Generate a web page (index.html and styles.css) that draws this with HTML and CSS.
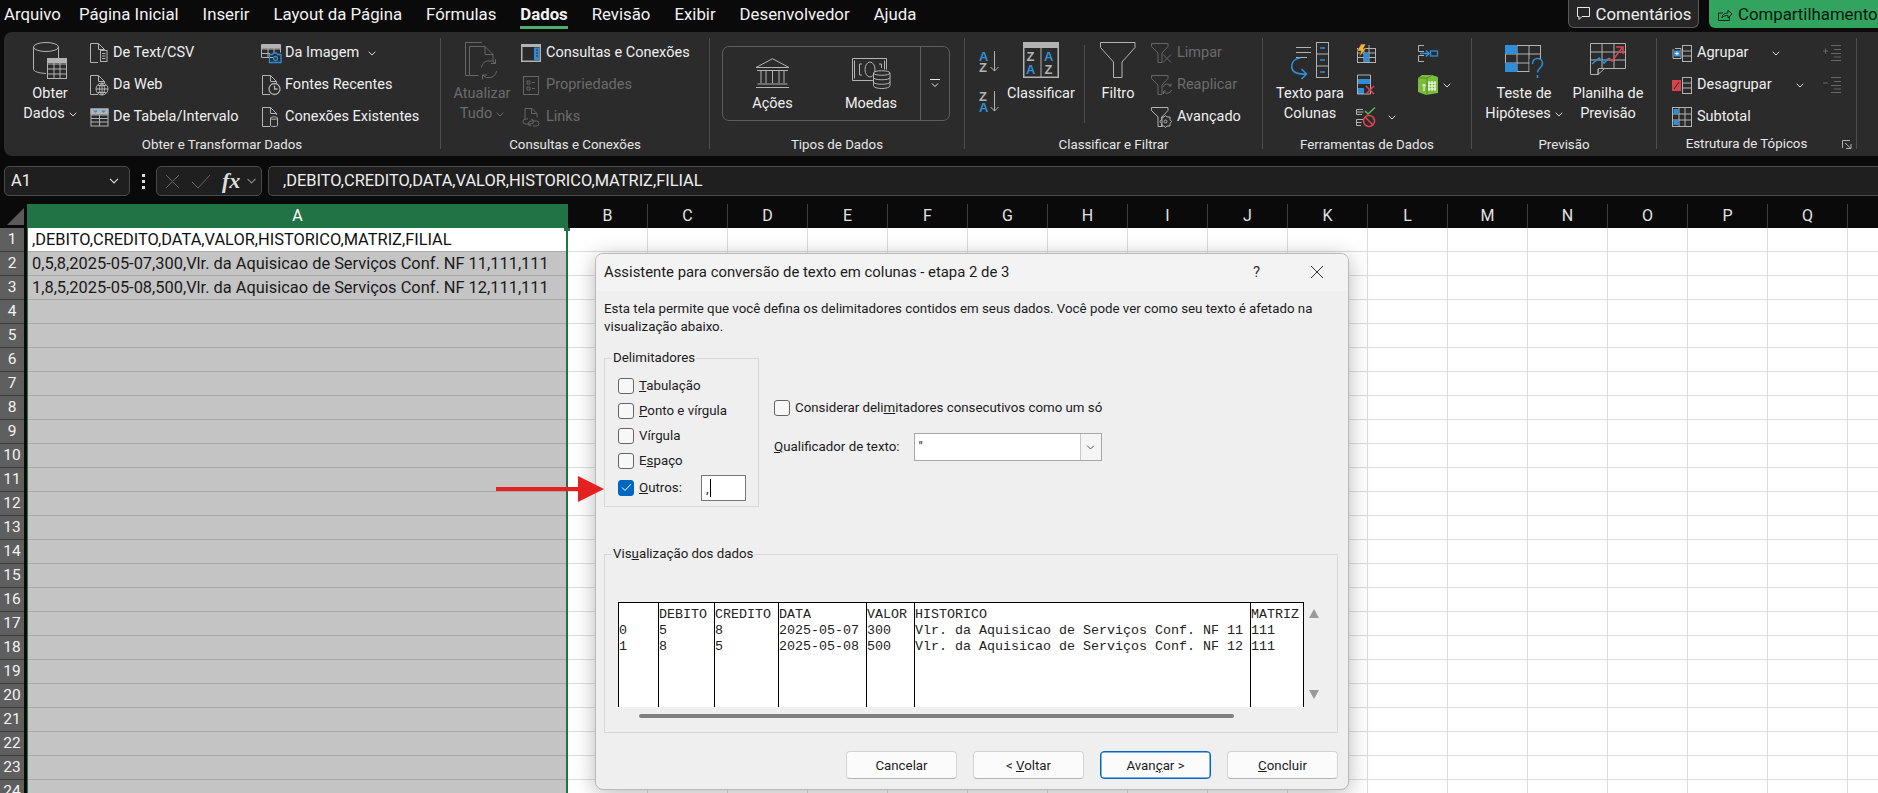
FILE: index.html
```html
<!DOCTYPE html>
<html lang="pt-BR">
<head>
<meta charset="utf-8">
<title>Excel - Texto para Colunas</title>
<link rel="stylesheet" href="styles.css">
</head>
<body>
<svg class="defs" aria-hidden="true">
  <symbol id="doc" viewBox="0 0 15 20"><path d="M8 19.5H.5V.5h8l6 6v1.500"/><path d="M8.500.5v6h6"/></symbol>
  <symbol id="chev" viewBox="0 0 8 5"><path d="M.7.7 4 4 7.300.7"/></symbol>
  <symbol id="funnel" viewBox="0 0 18 20"><path d="M.5.5h16.500v3L11 10v9.500H7V10L.5 3.500z"/></symbol>
</svg>

<header class="tabs">
  <nav class="tablist">
    <span class="tab-file">Arquivo</span><span>Página Inicial</span><span>Inserir</span><span>Layout da Página</span><span>Fórmulas</span>
    <span class="tab-on">Dados</span><span>Revisão</span><span>Exibir</span><span>Desenvolvedor</span><span>Ajuda</span>
  </nav>
  <div class="tab-actions">
    <button class="btn-comment"><svg width="15" height="15" class="st-w"><path d="M1.500 1.500h12v9H6l-3 3v-3H1.500z"/></svg>Comentários</button>
    <button class="btn-share"><svg width="16" height="15" class="st-k"><path d="M1.500 6v7.500h11V9M1.500 6H6M5 11c0-3 2-5 6-5V3l4 4-4 4V8.500C8 8.500 6 9 5 11z"/></svg>Compartilhamento</button>
  </div>
</header>

<section class="ribbon">
  <div class="group g1">
    <div class="gbody">
      <div class="large l-obter">
        <svg class="ico-l" width="34" height="37"><g class="st"><ellipse cx="13" cy="5" rx="12.500" ry="4.500"/><path d="M.5 5v22c0 2.500 5 4 12.500 4.500M25.500 5v11"/><rect x="14.500" y="16.500" width="19" height="20"/><path d="M14 22h20M14 27h20M14 32h20M21 21v16M27 21v16"/></g><rect class="f" x="14" y="16" width="20" height="5"/></svg>
        <span>Obter</span>
        <span>Dados<svg class="chev"><use href="#chev"/></svg></span>
      </div>
      <div class="stack s-get1">
        <div class="small"><span class="si"><svg width="18" height="20" class="st"><use href="#doc" width="15" height="20"/><rect x="10.500" y="7.500" width="6.500" height="11" class="panel"/><path d="M12 10.500h3.500M12 13h3.500M12 15.500h3.500"/></svg></span>De Text/CSV</div>
        <div class="small"><span class="si"><svg width="18" height="20" class="st"><use href="#doc" width="15" height="20"/><circle cx="12" cy="14" r="6" class="bf"/><path class="dk" d="M6 14h12M12 8v12M8 10.500h8M8 17.500h8M12 8c-3.500 3.500-3.500 8.500 0 12M12 8c3.500 3.500 3.500 8.500 0 12"/></svg></span>Da Web</div>
        <div class="small"><span class="si"><svg width="19" height="19"><rect class="f" x=".5" y=".5" width="18" height="6"/><path class="bf" d="M3 2.500h5L5.500 5zM11 2.500h5L13.500 5z"/><g class="st"><rect x="1" y="1" width="17" height="17"/><path d="M1 7h17M1 10.500h17M1 14h17M9.500 7v11"/></g></svg></span>De Tabela/Intervalo</div>
      </div>
      <div class="stack s-get2">
        <div class="small"><span class="si"><svg width="21" height="19"><g class="st"><path d="M12 13.500H.5V.5h19v8M.5 5h19M.5 9.500H9M7 1v12M13 1v8"/></g><rect class="f" x="1" y="1" width="18" height="3.500"/><path class="bst" d="M8.500 10.500h3l1-1.500h3l1 1.500h3.500v8H8.500z"/><circle class="bst" cx="14.500" cy="14.500" r="2"/></svg></span>Da Imagem<svg class="chev c-m"><use href="#chev"/></svg></div>
        <div class="small"><span class="si"><svg width="19" height="20" class="st"><use href="#doc" width="15" height="20"/><circle class="bst panel" cx="12.500" cy="14" r="5.500"/><path class="bst" d="M12.500 10.500V14h3"/></svg></span>Fontes Recentes</div>
        <div class="small"><span class="si"><svg width="19" height="20" class="st"><use href="#doc" width="15" height="20"/><path class="ost panel" d="M8.500 11c0-1.500 7-1.500 7 0v7.500c0 1.300-7 1.300-7 0zM8.500 11.500c1 1 6 1 7 0"/></svg></span>Conexões Existentes</div>
      </div>
    </div>
    <div class="glabel">Obter e Transformar Dados</div>
  </div>

  <div class="group g2">
    <div class="gbody">
      <div class="large l-refresh dis">
        <svg class="ico-l" width="35" height="38"><g class="sd"><path d="M17 .5H.5v33H4M4.500 4.500H20l8 8v7M4.500 4v29.500h9M20 4.500v8h8"/><path d="M16.500 25.500a8 8 0 0 1 14-4M31.500 29a8 8 0 0 1-14 4M30.500 17v4.500H26M17.500 37.500V33H22"/></g></svg>
        <span>Atualizar</span>
        <span>Tudo<svg class="chev"><use href="#chev"/></svg></span>
      </div>
      <div class="stack s-query">
        <div class="small gap5"><span class="si"><svg width="20" height="18"><rect class="f" x="0" y="0" width="20" height="18"/><rect class="dkf" x="1.500" y="3" width="17" height="13.500"/><rect class="bf" x="13" y="3.500" width="5" height="12.500"/><path class="dk" d="M15 6h2M15 9h2M15 12h2"/></svg></span>Consultas e Conexões</div>
        <div class="small gap5 dis"><span class="si"><svg width="16" height="19" class="sd"><rect x=".5" y=".5" width="15" height="18"/><path d="M4 5h3v3H4zM4 11h3v3H4zM9 6.500h3M9 12.500h3"/></svg></span>Propriedades</div>
        <div class="small gap5 dis"><span class="si"><svg width="18" height="19" class="sd"><path d="M3 12V.5h7l5 5v4M9.500.5v5h5"/><path d="M6 11H3.500a2.500 2.500 0 0 0 0 5H9a2.500 2.500 0 0 0 0-5M11 18h3.500a2.500 2.500 0 0 0 0-5H9a2.500 2.500 0 0 0 0 5"/></svg></span>Links</div>
      </div>
    </div>
    <div class="glabel">Consultas e Conexões</div>
  </div>

  <div class="group g3">
    <div class="gbody">
      <div class="dtypes">
        <div class="dtype d1">
          <svg width="35" height="30" class="st"><path d="M17.500.7 34 9.500H1zM2 12.500h31M6 13v12M11 13v12M17.500 13v12M24 13v12M29 13v12M2.500 26h30M1 29.500h33"/></svg>
          <span>Ações</span>
        </div>
        <div class="dtype d2">
          <svg width="39" height="32" class="st"><path d="M22 22.500H.5V.5h34v11M2.500 2.500v18M32.500 2.500v9M10 6H7.500v11H10M27 6h2.500v4"/><ellipse cx="18" cy="11.500" rx="5" ry="7.500"/><g class="panelg"><path d="M21.500 15c0-3 16.500-3 16.500 0v12.500c0 4-16.500 4-16.500 0z"/><path d="M21.500 15c0 3 16.500 3 16.500 0M21.500 19.500c0 3 16.500 3 16.500 0M21.500 24c0 3 16.500 3 16.500 0"/></g></svg>
          <span>Moedas</span>
        </div>
        <div class="dmore"><svg width="10" height="9" class="st-w"><path d="M0 .5h10M2 4.500l3 3 3-3"/></svg></div>
      </div>
    </div>
    <div class="glabel">Tipos de Dados</div>
  </div>

  <div class="group g4">
    <div class="gbody">
      <div class="sorts">
        <svg width="21" height="23" class="sorti"><text class="tb" x="0" y="11">A</text><text class="tg" x="0" y="21.500">Z</text><path class="st" d="M15.500 1v20M11.500 17l4 4 4-4"/></svg>
        <svg width="21" height="23" class="sorti"><text class="tg" x="0" y="11">Z</text><text class="tb" x="0" y="21.500">A</text><path class="st" d="M15.500 1v20M11.500 17l4 4 4-4"/></svg>
      </div>
      <div class="large l-sort">
        <svg class="ico-l" width="36" height="36"><rect class="f" width="36" height="36"/><rect class="dkf" x="1.500" y="6" width="33" height="28.500"/><path class="st" d="M18 6v29"/><text class="tg" x="3.500" y="19">Z</text><text class="tb" x="3" y="32">A</text><text class="tb" x="21" y="19">A</text><text class="tg" x="21.500" y="32">Z</text></svg>
        <span>Classificar</span>
      </div>
      <div class="vline"></div>
      <div class="large l-filter">
        <svg class="ico-l" width="36" height="36"><path class="st" d="M.5.5h34.500v5L22 20v15.500h-8.500V20L.5 5.500z"/></svg>
        <span>Filtro</span>
      </div>
      <div class="stack s-filt">
        <div class="small gap4 dis"><span class="si"><svg width="21" height="20" class="sd"><use href="#funnel" width="18" height="20"/><path d="M12 11.500l8 8M20 11.500l-8 8"/></svg></span>Limpar</div>
        <div class="small gap4 dis"><span class="si"><svg width="21" height="20" class="sd"><use href="#funnel" width="18" height="20"/><path d="M12 12a4.500 4.500 0 0 1 8-1M20.500 15a4.500 4.500 0 0 1-8 1.500M20 8.500V11h-2.500M12.500 19v-3h2.500"/></svg></span>Reaplicar</div>
        <div class="small gap4"><span class="si"><svg width="21" height="21" class="st"><use href="#funnel" width="18" height="20"/><path class="bf gear" d="M14.500 8.500l1.500 1.500h3v2.500l1.500 2-1.500 2V19h-3l-1.500 1.500L13 19h-2.500v-2.500L9 14.500l1.500-2V10H13z"/><circle class="dkf" cx="14.500" cy="14.500" r="1.500"/></svg></span>Avançado</div>
      </div>
    </div>
    <div class="glabel">Classificar e Filtrar</div>
  </div>

  <div class="group g5">
    <div class="gbody">
      <div class="large l-text">
        <svg class="ico-l" width="38" height="37"><g class="st"><path d="M5 5.500h15M5 10.500h15M5 15.500h11"/><rect x="25.500" y=".5" width="12" height="35"/><path d="M26 12h11M26 24h11"/></g><path class="bd" d="M29 6h5M29 18h5M29 30h5"/><path class="bd" d="M9 16C3 17 0 21 .8 26c.9 5 6.200 6.500 14.200 6M10.500 27l5 5-5 5"/></svg>
        <span>Texto para</span>
        <span>Colunas</span>
      </div>
      <div class="stack s-tools">
        <div class="small"><span class="si"><svg width="20" height="19"><g class="st"><rect x="1.500" y="4.500" width="18" height="14"/><path d="M2 9h17M2 13.500h17M13 1v17M8 5v13"/></g><rect class="bf" x="8" y="9" width="5" height="9"/><path class="yf" d="M5 0h5L7 5h3L3 13l2-6H1z"/></svg></span></div>
        <div class="small"><span class="si"><svg width="18" height="20"><rect class="bf" x="0" y="4" width="14" height="5"/><rect class="bf" x="0" y="13" width="7" height="6"/><g class="st"><path d="M.5 0h13v19H.5z"/></g><path class="rd" d="M9 11l8 8M17 11l-8 8"/></svg></span></div>
        <div class="small"><span class="si"><svg width="20" height="20"><g class="st"><path d="M7 2.500H.5v5H6M.5 5h7M7 12.500H.5v6H5M.5 15.500h5"/></g><path class="gr" d="M9 4l3 3 7-6.500"/><circle class="rd" cx="13" cy="14" r="5.500"/><path class="rd" d="M9 10l8 8"/></svg></span><svg class="chev c-v"><use href="#chev"/></svg></div>
      </div>
      <div class="stack s-tools2">
        <div class="small"><span class="si"><svg width="20" height="17"><g class="st"><path d="M6 .5H.5v6H6M6 10.500H.5v6H6"/></g><path class="bd" d="M2 8.500h9M8 5.500l3 3-3 3"/><rect class="bst" x="12.500" y="6" width="7" height="5"/></svg></span></div>
        <div class="small"><span class="si"><svg width="20" height="20"><path class="grf" d="M4 0 14 0 20 2V18L8 20 0 17V3z"/><path class="grd" d="M0 3 9 3 14 0M9 3V20"/><path class="wst" d="M6 16V9M4 11l2-2 2 2M11 6v10M14 6v10M17 6v10M10 8h8M10 11h8M10 14h8"/></svg></span><svg class="chev c-p"><use href="#chev"/></svg></div>
      </div>
    </div>
    <div class="glabel">Ferramentas de Dados</div>
  </div>

  <div class="group g6">
    <div class="gbody">
      <div class="large l-test">
        <svg class="ico-l i-test" width="39" height="34"><g class="st"><rect x=".5" y=".5" width="35" height="26"/><path d="M12 1v26M24 1v26M1 9h34M1 18h34"/></g><rect class="bf" x="0" y="0" width="12" height="9"/><rect class="bf" x="0" y="18" width="12" height="9"/><rect class="dkf" x="24.500" y="14" width="14" height="20"/><path class="bd" d="M27.500 19c0-7.500 10-7 10-.5 0 4.500-5 4.500-5 9M32.500 30v3"/></svg>
        <span>Teste de</span>
        <span>Hipóteses<svg class="chev"><use href="#chev"/></svg></span>
      </div>
      <div class="large l-plan">
        <svg class="ico-l i-plan" width="36" height="33"><g class="st"><path d="M8 31.500H.5V.5h35v25h-27zM8 26v5.500L14 26M.5 9h35M.5 17h35M12 1v25M24 1v25"/></g><path class="bd" d="M2 21l7-6 5 5 5-5"/><path class="rd" d="M19 15l3 3 10-13M26 4h7v7"/></svg>
        <span>Planilha de</span>
        <span>Previsão</span>
      </div>
    </div>
    <div class="glabel">Previsão</div>
  </div>

  <div class="group g7">
    <div class="gbody">
      <div class="stack s-outline">
        <div class="small"><span class="si"><svg width="20" height="17"><g class="st"><rect x="10.500" y=".5" width="9" height="16"/><path d="M11 6h8M11 11h8M3 3.500h6v10H1V4"/></g><rect class="bf" x="2" y="5.500" width="6" height="6"/><path class="wst" d="M5 6.500v4M3 8.500h4"/></svg></span>Agrupar<svg class="chev c-g"><use href="#chev"/></svg></div>
        <div class="small"><span class="si"><svg width="20" height="17"><g class="st"><rect x="10.500" y=".5" width="9" height="16"/><path d="M11 6h8M11 11h8"/></g><rect class="rdf" x="0" y="3" width="9" height="11"/><path class="dk" d="M2 12l5-7"/></svg></span>Desagrupar<svg class="chev c-g"><use href="#chev"/></svg></div>
        <div class="small"><span class="si"><svg width="20" height="20"><g class="st"><rect x=".5" y=".5" width="19" height="19"/><path d="M7 1v18M13 1v18M1 7h18M1 13h18"/></g><rect class="bf" x="1.500" y="2" width="5" height="5"/><rect class="bf" x="1.500" y="13" width="5" height="5"/></svg></span>Subtotal</div>
      </div>
      <div class="stack s-outline2">
        <div class="small dis"><svg width="18" height="16" class="sd"><path d="M8 .5h10M11 4.500h7M8 8.500h10M11 12h7M8 15.500h10M0 6h5M2.500 3.500v5"/></svg></div>
        <div class="small dis"><svg width="18" height="16" class="sd"><path d="M8 .5h10M11 4.500h7M8 8.500h10M11 12h7M8 15.500h10M0 6h5"/></svg></div>
      </div>
    </div>
    <div class="glabel">Estrutura de Tópicos</div>
    <svg class="launcher st" width="10" height="9"><path d="M.5 8V.5H8M3 3l6 5.500M9 4v4.500H4"/></svg>
  </div>
</section>

<section class="fbar">
  <div class="namebox"><span>A1</span><svg class="chev"><use href="#chev"/></svg></div>
  <div class="fdots"><i></i><i></i><i></i></div>
  <div class="fxbox">
    <svg width="15" height="15" class="sd"><path d="M1 1l13 13M14 1 1 14"/></svg>
    <svg width="20" height="15" class="sd"><path d="M1 8l6 6L19 1"/></svg>
    <em>fx</em>
    <svg class="chev"><use href="#chev"/></svg>
  </div>
  <div class="finput">,DEBITO,CREDITO,DATA,VALOR,HISTORICO,MATRIZ,FILIAL</div>
</section>

<main class="sheet">
  <div class="heads">
    <div class="corner"><svg width="17" height="17"><path class="cornerf" d="M17 0v17H0z"/></svg></div>
    <div class="ch cha">A</div>
    <div class="ch">B</div><div class="ch">C</div><div class="ch">D</div><div class="ch">E</div><div class="ch">F</div><div class="ch">G</div><div class="ch">H</div><div class="ch">I</div><div class="ch">J</div><div class="ch">K</div><div class="ch">L</div><div class="ch">M</div><div class="ch">N</div><div class="ch">O</div><div class="ch">P</div><div class="ch">Q</div><div class="ch"></div>
  </div>
  <div class="cells">
    <div class="rowheads">
      <div>1</div><div>2</div><div>3</div><div>4</div><div>5</div><div>6</div><div>7</div><div>8</div><div>9</div><div>10</div><div>11</div><div>12</div><div>13</div><div>14</div><div>15</div><div>16</div><div>17</div><div>18</div><div>19</div><div>20</div><div>21</div><div>22</div><div>23</div><div>24</div>
    </div>
    <div class="cola">
      <div class="active">,DEBITO,CREDITO,DATA,VALOR,HISTORICO,MATRIZ,FILIAL</div>
      <div>0,5,8,2025-05-07,300,Vlr. da Aquisicao de Serviços Conf. NF 11,111,111</div>
      <div>1,8,5,2025-05-08,500,Vlr. da Aquisicao de Serviços Conf. NF 12,111,111</div>
      <div></div><div></div><div></div><div></div><div></div><div></div><div></div><div></div><div></div><div></div><div></div><div></div><div></div><div></div><div></div><div></div><div></div><div></div><div></div><div></div><div></div>
      <span class="handle"></span>
    </div>
    <div class="rest"></div>
  </div>
</main>

<section class="dialog">
  <div class="dtitle">
    <span>Assistente para conversão de texto em colunas - etapa 2 de 3</span>
    <span class="dq">?</span>
    <svg class="dx" width="14" height="14"><path d="M1 1l12 12M13 1 1 13"/></svg>
  </div>
  <div class="dbody">
    <p class="ddesc">Esta tela permite que você defina os delimitadores contidos em seus dados. Você pode ver como seu texto é afetado na visualização abaixo.</p>
    <div class="dopts">
      <fieldset class="fs fs-del">
        <legend>Delimitadores</legend>
        <div class="opt"><span class="cb"></span><span><u>T</u>abulação</span></div>
        <div class="opt"><span class="cb"></span><span><u>P</u>onto e vírgula</span></div>
        <div class="opt"><span class="cb"></span><span>Vír<u>g</u>ula</span></div>
        <div class="opt"><span class="cb"></span><span>E<u>s</u>paço</span></div>
        <div class="opt opt-other"><span class="cb cb-on"><svg width="11" height="9"><path d="M1 4.500l3 3L10 1"/></svg></span><span><u>O</u>utros:</span><span class="otherbox">,<i></i></span></div>
      </fieldset>
      <div class="dright">
        <div class="opt"><span class="cb"></span><span>Considerar deli<u>m</u>itadores consecutivos como um só</span></div>
        <div class="qual"><span><u>Q</u>ualificador de texto:</span>
          <div class="qsel"><span>"</span><b><svg class="chevd"><use href="#chev"/></svg></b></div>
        </div>
      </div>
    </div>
    <fieldset class="fs fs-prev">
      <legend>Vis<u>u</u>alização dos dados</legend>
      <div class="prevrow">
        <div class="preview">
          <div class="pc p1"><div>&nbsp;</div><div>0</div><div>1</div></div>
          <div class="pc p2"><div>DEBITO</div><div>5</div><div>8</div></div>
          <div class="pc p3"><div>CREDITO</div><div>8</div><div>5</div></div>
          <div class="pc p4"><div>DATA</div><div>2025-05-07</div><div>2025-05-08</div></div>
          <div class="pc p5"><div>VALOR</div><div>300</div><div>500</div></div>
          <div class="pc p6"><div>HISTORICO</div><div>Vlr. da Aquisicao de Serviços Conf. NF 11</div><div>Vlr. da Aquisicao de Serviços Conf. NF 12</div></div>
          <div class="pc p7"><div>MATRIZ</div><div>111</div><div>111</div></div>
        </div>
        <div class="vscroll"><svg width="10" height="9"><path d="M5 0l5 9H0z"/></svg><svg width="10" height="9"><path d="M5 9 10 0H0z"/></svg></div>
      </div>
      <div class="hthumb"></div>
    </fieldset>
    <div class="dbtns">
      <button>Cancelar</button>
      <button>&lt; <u>V</u>oltar</button>
      <button class="primary">Avan<u>ç</u>ar &gt;</button>
      <button><u>C</u>oncluir</button>
    </div>
  </div>
</section>

<svg class="arrow" width="108" height="28"><path d="M0 12h82V1l26 13-26 13V16H0z"/></svg>
</body>
</html>
```

FILE: styles.css
```css
* { box-sizing: border-box; }
html, body { margin: 0; height: 793px; overflow: hidden; }
body {
  position: relative;
  background: #0a0a0a;
  color: #efefef;
  font: 14.5px/20px Roboto, "Liberation Sans", sans-serif;
}
.defs { position: absolute; width: 0; height: 0; }
svg { display: block; flex: none; overflow: visible; }
use { fill: inherit; }

/* svg paint classes */
.st, .st path, .st rect, .st circle, .st ellipse, .st use { fill: none; stroke: #b3b3b3; }
.sd, .sd path, .sd rect, .sd use { fill: none; stroke: #666; }
.st-w { fill: none; stroke: #e8e8e8; }
.st-k { fill: none; stroke: #0b2a17; }
.f { fill: #b3b3b3; stroke: none; }
.bf { fill: #2e8ed9; stroke: none; }
.dkf { fill: #2b2b2b; stroke: none; }
.yf { fill: #f2b632; stroke: #2b2b2b; stroke-width: .5; }
.rdf { fill: #d9414b; }
.grf { fill: #7dbb3c; }
.grd { fill: none; stroke: #4f8f1f; }
.dk { fill: none; stroke: #1f2a33; }
.wst { fill: none; stroke: #fff; }
.bst { fill: none; stroke: #2e8ed9; stroke-width: 1.300; }
.bd { fill: none; stroke: #2e8ed9; stroke-width: 1.600; }
.rd { fill: none; stroke: #e0444e; stroke-width: 1.500; }
.gr { fill: none; stroke: #5cb85c; stroke-width: 1.500; }
.ost { fill: none; stroke: #e09a3a; }
.panel, svg .panel { fill: #2b2b2b; }
.panelg path { fill: #2b2b2b; }
.panelg path + path { fill: none; }
.tb, .tg { font: bold 13px "Liberation Sans", sans-serif; stroke: none; }
.tb { fill: #2e8ed9; }
.tg { fill: #b3b3b3; }
.gear { stroke: none; }

/* tab strip */
.tabs { height: 32px; display: flex; justify-content: space-between; }
.tablist { display: flex; gap: 24px; padding-left: 4px; font-size: 16.800px; line-height: 28px; color: #f2f2f2; }
.tablist span { white-space: nowrap; }
.tablist .tab-file { margin-right: -6px; }
.tab-on { font-weight: 700; height: 29px; border-bottom: 3px solid #4fae6e; }
.tab-actions { display: flex; gap: 10px; width: 310px; overflow: hidden; flex: none; }
.tab-actions button {
  height: 28px; padding: 0; margin: 0; display: flex; align-items: center; gap: 5px;
  font: 16.800px Roboto, sans-serif; border-radius: 0 0 6px 6px; white-space: nowrap;
}
.btn-comment { width: 131px; justify-content: center; flex: none; background: #262626; color: #eee; border: 1px solid #5a5a5a; border-top: 0; }
.tab-actions .btn-share { width: 190px; flex: none; padding-left: 8px; background: #33a45f; color: #07170e; border: 0; border-radius: 0 0 0 6px; }

/* ribbon */
.ribbon { height: 124px; margin-left: 4px; padding-top: 6px; display: flex; background: #2b2b2b; border-radius: 8px 0 0 8px; }
.group { position: relative; height: 111px; border-right: 1px solid #4d4d4d; flex: none; }
.g1 { width: 437px; } .g2 { width: 269px; } .g3 { width: 255px; } .g4 { width: 298px; }
.g5 { width: 209px; } .g6 { width: 185px; } .g7 { width: 200px; }
.gbody { height: 97px; display: flex; }
.glabel { height: 14px; line-height: 20px; text-align: center; font-size: 13.300px; color: #e6e6e6; white-space: nowrap; }
.g7 .glabel { padding-right: 20px; margin-top: -1px; }
.launcher { position: absolute; right: 4px; top: 102px; }

.large { display: flex; flex-direction: column; align-items: center; padding-top: 4px; white-space: nowrap; flex: none; }
.large > span { display: flex; align-items: center; height: 20px; }
.ico-l { height: 37px; margin-bottom: 5px; }
.chev { width: 8px; height: 5px; fill: none; stroke: #d8d8d8; margin-left: 4px; }
.chev use { fill: none; }
.dis { color: #6c6c6c; }
.dis .chev { stroke: #6c6c6c; }

.stack { display: flex; flex-direction: column; margin-top: -1px; flex: none; }
.small { display: flex; align-items: center; height: 32px; gap: 2px; white-space: nowrap; }
.gap5 { gap: 3px; }
.gap4 { gap: 4px; }
.si { width: 24px; display: flex; justify-content: center; flex: none; }

.l-obter { width: 78px; margin-left: 7px; }
.s-get1 { width: 172px; margin-left: -2px; }
.c-m { margin-left: 7px; }
.l-refresh { width: 78px; margin-left: 2px; }
.s-query { margin-left: -2px; }

.dtypes { margin: 8px 0 0 12px; width: 228px; height: 75px; display: flex; border: 1px solid #5e5e5e; border-radius: 7px; }
.dtype { display: flex; flex-direction: column; align-items: center; padding-top: 11px; }
.dtype svg { height: 32px; margin-bottom: 4px; }
.dtype span { line-height: 20px; }
.d1 { width: 99px; }
.d2 { width: 98px; }
.dmore { flex: 1; border-left: 1px solid #5e5e5e; display: flex; align-items: center; justify-content: center; }

.sorts { margin-left: 14px; padding-top: 12px; display: flex; flex-direction: column; gap: 17px; width: 27px; flex: none; }
.l-sort { width: 70px; }
.vline { width: 1px; height: 78px; margin: 7px 3px 0 8px; background: #4d4d4d; flex: none; }
.l-filter { width: 60px; }
.s-filt { margin-left: 1px; }

.l-text { width: 88px; margin-left: 3px; }
.s-tools { width: 62px; }
.c-v { margin-left: 8px; }
.c-p { margin-left: 1px; }

.l-test { width: 100px; margin-left: 2px; }
.l-plan { width: 68px; }
.i-test { margin-top: 3px; margin-bottom: 2px; }
.i-plan { margin-top: 1px; margin-bottom: 4px; }

.s-outline { margin-left: 13px; width: 153px; }
.s-outline .small { gap: 3px; }
.c-g { margin-left: 21px; }
.s-outline2 { flex: none; }

/* formula bar */
.fbar { height: 30px; margin-top: 10px; display: flex; align-items: stretch; font-size: 16.400px; }
.namebox { width: 126px; margin-left: 4px; display: flex; align-items: center; justify-content: space-between; padding: 0 10px 0 6px; background: #1f1f1f; border: 1px solid #4a4a4a; border-radius: 5px; }
.namebox .chev { width: 10px; height: 6px; }
.fdots { width: 26px; display: flex; flex-direction: column; align-items: center; justify-content: center; gap: 3px; }
.fdots i { width: 3px; height: 3px; background: #ddd; }
.fxbox { width: 106px; display: flex; align-items: center; padding-left: 8px; gap: 11px; background: #1f1f1f; border: 1px solid #4a4a4a; border-radius: 5px; }
.fxbox em { font: italic 700 22px "Liberation Serif", serif; color: #ddd; }
.fxbox .chev { margin-left: -5px; width: 11px; height: 6px; stroke: #888; }
.finput { flex: 1; margin-left: 6px; padding-left: 14px; line-height: 28px; background: #1f1f1f; border: 1px solid #4a4a4a; border-right: 0; border-radius: 5px 0 0 5px; }

/* sheet */
.sheet { margin-top: 8px; }
.heads { height: 24px; display: flex; overflow: hidden; }
.corner { width: 27px; flex: none; padding: 4px 0 0 7px; }
.cornerf { fill: #5a5a5a; }
.ch { width: 80px; flex: none; line-height: 23px; text-align: center; color: #e2e2e2; font-size: 16px; border-right: 1px solid #3d3d3d; }
.cha { width: 541px; background: #217346; color: #fff; border-right: 0; }
.cells { display: flex; height: 565px; overflow: hidden; }
.rowheads { width: 27px; flex: none; padding-right: 3px; }
.rowheads div { height: 24px; line-height: 23px; background: #5f5f5f; border-bottom: 1px solid #3a3a3a; text-align: center; color: #f2f2f2; font-size: 15.500px; }
.cola { position: relative; width: 541px; flex: none; background: #c4c4c4; border-left: 1px solid #217346; border-right: 2px solid #217346; color: #1a1a1a; }
.cola div { height: 24px; line-height: 23px; padding-left: 4px; border-bottom: 1px solid #a9a9a9; font-size: 16.400px; white-space: nowrap; }
.cola .active { background: #fff; color: #111; }
.handle { position: absolute; right: -4px; top: -3px; width: 6px; height: 6px; background: #217346; }
.rest {
  flex: 1;
  background-color: #fff;
  background-image: linear-gradient(to right, transparent 79px, #dcdcdc 79px), linear-gradient(to bottom, transparent 23px, #dcdcdc 23px);
  background-size: 80px 24px;
}

/* dialog */
.dialog {
  position: absolute; left: 595px; top: 253px; width: 754px; height: 537px;
  background: #efefef; color: #1c1c1c; border: 1px solid #b9b9b9; border-radius: 8px;
  box-shadow: 0 4px 22px rgba(0,0,0,.28); font-size: 13.300px; line-height: 18px; overflow: hidden;
}
.dtitle { height: 37px; display: flex; align-items: center; padding: 0 0 2px 8px; background: #f3f3f3; font-size: 14.870px; }
.dq { margin-left: auto; margin-right: 50px; font-size: 15px; color: #333; }
.dx { margin-right: 24px; fill: none; stroke: #333; }
.dbody { padding: 9px 10px 0 8px; }
.ddesc { margin: 0; width: 725px; }
.dopts { display: flex; margin-top: 14px; }
.fs { margin: 0; padding: 0; border: 1px solid #d8d8d8; min-width: 0; }
.fs legend { margin-left: -6px; padding: 0 1px; line-height: 16px; }
.fs-del { width: 155px; height: 157px; padding: 7px 12px 0 13px; }
.opt { display: flex; align-items: center; gap: 5px; height: 25px; white-space: nowrap; }
.opt > span + span { padding-top: 1px; }
.cb { width: 16px; height: 16px; background: #f7f7f7; border: 1px solid #666; border-radius: 3px; display: flex; align-items: center; justify-content: center; flex: none; }
.cb-on { background: #0067c0; border-color: #0067c0; }
.cb-on svg { fill: none; stroke: #fff; }
.opt-other { height: 27px; margin-top: 1px; }
.opt .otherbox { margin-left: auto; width: 45px; height: 26px; background: #fff; border: 1px solid #777; padding: 0 0 0 4px; line-height: 26px; display: flex; }
.otherbox i { width: 1px; height: 18px; margin: 3px 0 0 1px; background: #000; }
.dright { margin-left: 15px; padding-top: 45px; }
.qual { display: flex; align-items: center; margin-top: 13px; gap: 14px; }
.qsel { width: 188px; height: 28px; background: #fff; border: 1px solid #a8a8a8; display: flex; align-items: center; padding-left: 4px; justify-content: space-between; }
.qsel b { width: 21px; height: 26px; background: #f5f5f5; border-left: 1px solid #c8c8c8; display: flex; align-items: center; justify-content: center; }
.chevd { width: 9px; height: 5px; fill: none; stroke: #555; }
.fs-prev { width: 734px; height: 187px; margin-top: 39px; padding: 40px 0 0 13px; }
.prevrow { display: flex; }
.preview { width: 686px; height: 105px; background: #fff; border-top: 1px solid #000; border-right: 1px solid #000; display: flex; overflow: hidden; padding: 0; }
.pc { padding-top: 4px; border-left: 1px solid #000; height: 104px; flex: none; font: 13.330px/16px "Liberation Mono", monospace; color: #222; white-space: pre; overflow: hidden; }
.p1 { width: 40px; } .p2 { width: 56px; } .p3 { width: 64px; } .p4 { width: 88px; } .p5 { width: 48px; } .p6 { width: 336px; } .p7 { width: 52px; }
.vscroll { width: 20px; margin-left: 5px; height: 105px; padding: 7px 0 8px; display: flex; flex-direction: column; justify-content: space-between; fill: #9a9a9a; }
.hthumb { width: 595px; height: 4px; margin: 7px 0 0 21px; background: #808080; border-radius: 2px; }
.dbtns { display: flex; justify-content: flex-end; gap: 16px; margin-top: 18px; }
.dbtns button { width: 111px; height: 28px; padding: 0; background: #fbfbfb; border: 1px solid #d3d3d3; border-bottom-color: #b5b5b5; border-radius: 4px; color: #1c1c1c; font: 13.300px Roboto, sans-serif; }
.dbtns .primary { border: 1px solid #0067c0; box-shadow: inset 0 0 0 .5px #0067c0; }

.arrow { position: absolute; left: 496px; top: 475px; fill: #e5211f; }
```
